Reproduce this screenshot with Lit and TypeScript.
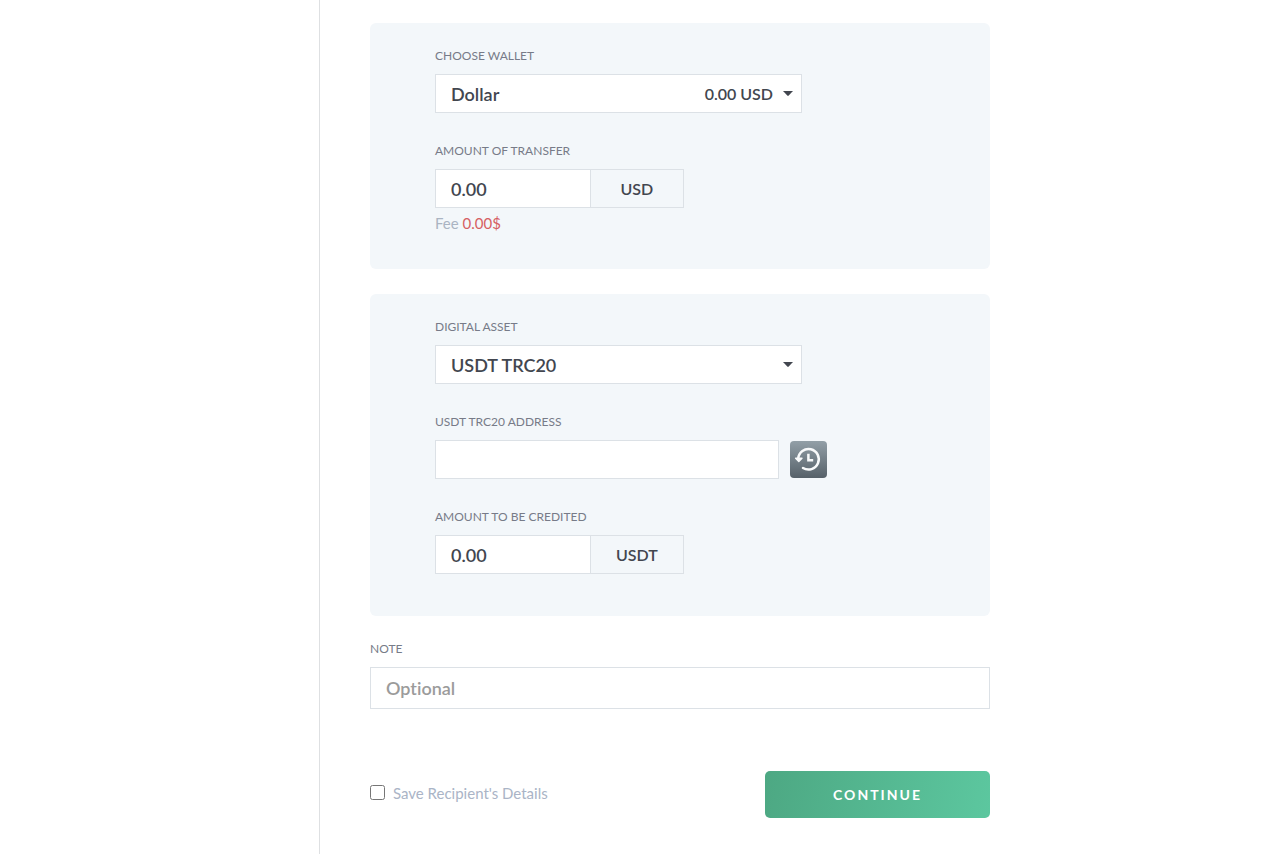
import { LitElement, html, css } from "lit";
import { customElement, state } from "lit/decorators.js";

const caret = html`<svg class="caret" viewBox="0 0 10 5" aria-hidden="true">
  <path d="M0 0h10L5.7 4.6a1 1 0 0 1-1.4 0z" fill="currentColor" />
</svg>`;

@customElement("app-root")
export class AppRoot extends LitElement {
  @state() private amount = "0.00";

  static styles = css`
    :host {
      display: grid;
      grid-template-columns: 320px 1fr;
      min-height: 100vh;
      background: #fff;
      color: #42464f;
      font-family: Lato, "Open Sans", sans-serif;
      font-size: 16px;
      font-variant-ligatures: none;
      line-height: 20px;
    }
    * {
      box-sizing: border-box;
    }
    aside {
      border-right: 1px solid #dee0e2;
    }
    form {
      max-width: 720px;
      padding: 23px 50px 36px;
    }
    .card {
      display: grid;
      gap: 28px;
      margin-bottom: 25px;
      padding: 23px 65px 42px;
      border-radius: 6px;
      background: #f3f7fa;
    }
    .card.source {
      padding-bottom: 36px;
    }
    .card.target {
      margin-bottom: 23px;
    }
    .field {
      display: grid;
      gap: 8px;
    }
    .label {
      color: #777b88;
      font-size: 12px;
      text-transform: uppercase;
    }
    input,
    select,
    button {
      margin: 0;
      font: inherit;
      font-variant-ligatures: none;
      color: inherit;
    }
    .control {
      width: 100%;
      height: 39px;
      padding: 0 15px;
      border: 1px solid #dce1e6;
      border-radius: 0;
      background: #fff;
      font-size: 18px;
      font-weight: 600;
      appearance: none;
      outline: none;
    }
    .control:focus {
      border-color: #58bd97;
    }
    .control.tall {
      height: 42px;
    }
    .control::placeholder {
      color: #9b9b9b;
      opacity: 1;
    }
    .picker {
      display: grid;
      align-items: center;
      max-width: 367px;
    }
    .picker > * {
      grid-area: 1 / 1;
    }
    .trailing {
      display: flex;
      align-items: center;
      justify-self: end;
      gap: 10px;
      padding-right: 9px;
      font-weight: 600;
      pointer-events: none;
    }
    .caret {
      width: 10px;
      height: 5px;
    }
    .amount {
      display: grid;
      grid-template-columns: 5fr 3fr;
      max-width: 249px;
    }
    .unit {
      display: grid;
      place-items: center;
      border: 1px solid #dce1e6;
      border-left: 0;
      font-weight: 600;
    }
    .fee {
      margin: -3px 0 0;
      color: #aab4c2;
      font-size: 15px;
    }
    .fee output {
      color: #d65f62;
    }
    .address {
      display: grid;
      grid-template-columns: minmax(0, 344px) 37px;
      gap: 11px;
      align-items: center;
    }
    .history {
      display: grid;
      width: 37px;
      height: 37px;
      padding: 0;
      border: 0;
      border-radius: 4px;
      background: linear-gradient(#929fa7, #566169);
      color: #f8fafb;
      cursor: pointer;
    }
    .history svg {
      width: 37px;
      height: 37px;
    }
    .actions {
      display: flex;
      align-items: center;
      justify-content: space-between;
      gap: 20px;
      margin-top: 62px;
    }
    .save {
      display: flex;
      align-items: center;
      gap: 8px;
      padding-bottom: 4px;
      color: #aab4c6;
      font-size: 15px;
    }
    .save input {
      width: 15px;
      height: 15px;
    }
    .continue {
      width: 225px;
      height: 47px;
      border: 0;
      border-radius: 5px;
      background: linear-gradient(100deg, #4da883, #5cc79f);
      color: #fff;
      font-size: 14px;
      font-weight: 700;
      letter-spacing: 2px;
      text-transform: uppercase;
      cursor: pointer;
    }
  `;

  private onAmount(e: Event) {
    this.amount = (e.target as HTMLInputElement).value;
  }

  render() {
    return html`
      <aside></aside>
      <form @submit=${(e: Event) => e.preventDefault()}>
        <section class="card source">
          <div class="field">
            <label class="label" for="wallet">Choose wallet</label>
            <div class="picker">
              <select class="control" id="wallet">
                <option>Dollar</option>
              </select>
              <span class="trailing"><span>0.00 USD</span>${caret}</span>
            </div>
          </div>
          <div class="field">
            <label class="label" for="amount">Amount of transfer</label>
            <div class="amount">
              <input class="control" id="amount" inputmode="decimal" .value=${this.amount} @input=${this.onAmount} />
              <span class="unit">USD</span>
            </div>
            <p class="fee">Fee <output for="amount">0.00$</output></p>
          </div>
        </section>

        <section class="card target">
          <div class="field">
            <label class="label" for="asset">Digital asset</label>
            <div class="picker">
              <select class="control" id="asset">
                <option>USDT TRC20</option>
              </select>
              <span class="trailing">${caret}</span>
            </div>
          </div>
          <div class="field">
            <label class="label" for="address">USDT TRC20 address</label>
            <div class="address">
              <input class="control" id="address" type="text" />
              <button class="history" type="button" aria-label="Recent addresses">
                <svg viewBox="0 0 37 37" fill="none" stroke="currentColor" stroke-width="2.5" aria-hidden="true">
                  <path d="M8.2 17.5A10.3 10.3 0 1 1 13 27" stroke-linecap="round" />
                  <path d="M5.6 17.2h6.4l-3.2 3.4z" fill="currentColor" stroke-width="1.4" stroke-linejoin="round" />
                  <path d="M18.4 12.8v6.5h4.8" />
                </svg>
              </button>
            </div>
          </div>
          <div class="field">
            <label class="label" for="credited">Amount to be credited</label>
            <div class="amount">
              <input class="control" id="credited" inputmode="decimal" .value=${this.amount} @input=${this.onAmount} />
              <span class="unit">USDT</span>
            </div>
          </div>
        </section>

        <div class="field">
          <label class="label" for="note">Note</label>
          <input class="control tall" id="note" type="text" placeholder="Optional" />
        </div>

        <div class="actions">
          <label class="save"><input type="checkbox" />Save Recipient's Details</label>
          <button class="continue" type="submit">Continue</button>
        </div>
      </form>
    `;
  }
}
